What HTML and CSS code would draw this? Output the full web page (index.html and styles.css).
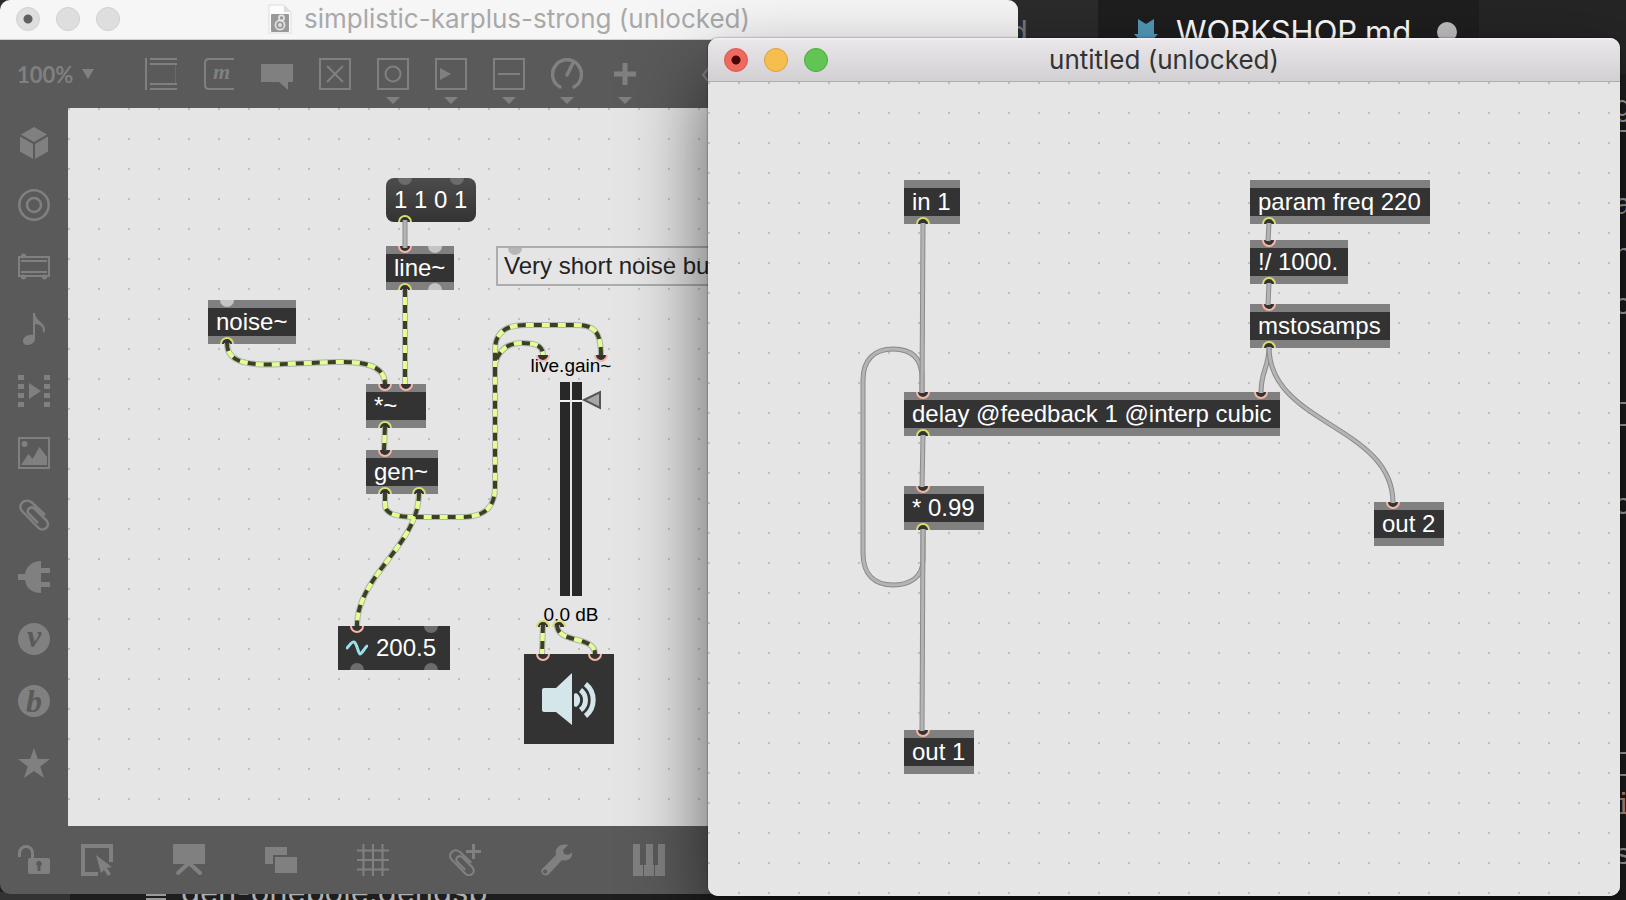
FILE: index.html
```html
<!DOCTYPE html>
<html lang="en">
<head>
<meta charset="utf-8">
<title>Karplus-Strong patch</title>
<link rel="stylesheet" href="styles.css">
</head>
<body>
<div class="editor" aria-hidden="true">
  <div class="tabs">
    <div class="tab tab-prev">README.md</div>
    <div class="tab tab-active">
      <svg class="tab-icon" viewBox="0 0 24 28"><path d="M4 0L12 5L20 0V15H24L12 28L0 15H4Z" fill="#519aba"/></svg>
      <span>WORKSHOP.md</span>
      <i class="unsaved"></i>
    </div>
  </div>
  <div class="code">
    <span class="underlined">g</span><span></span><span>a</span><span>n</span><span>o</span><span></span><span class="ruled"></span><span></span><span>c</span><span></span><span></span><span></span><span></span><span class="ruled"></span><span class="warm">i</span><span>s</span>
  </div>
  <div class="activity">
    <svg viewBox="0 0 48 12" width="48" height="12"><g fill="none" stroke="#999" stroke-width="3"><path d="M4 0V12M37 12Q43 8 42 0"/></g><circle cx="21" cy="0" r="6" fill="#999"/></svg>
  </div>
  <div class="file-row"><i class="file-lines"></i><span>gen-onepole.gendsp</span></div>
</div>

<main class="window window-back">
  <header class="titlebar">
    <div class="lights">
      <button class="light dotted" aria-label="Close"></button>
      <button class="light" aria-label="Minimize"></button>
      <button class="light" aria-label="Zoom"></button>
    </div>
    <h1 class="title">
      <svg class="doc-icon" viewBox="0 0 24 30"><path d="M1 1H16L23 8V29H1Z" fill="#fcfcfc" stroke="#ddd"/><path d="M16 1V8H23Z" fill="#ddd"/><rect x="3" y="10" width="18" height="18" rx="1" fill="#999"/><g fill="none" stroke="#e6e6e6" stroke-width="1.6"><circle cx="12" cy="21" r="4.6"/><circle cx="13.500" cy="14" r="2.600"/></g><circle cx="12" cy="21" r="2" fill="#d2e4e6"/></svg>
      <span>simplistic-karplus-strong (unlocked)</span>
    </h1>
  </header>
  <div class="workspace">
    <nav class="toolbar" aria-label="Objects">
      <label class="zoom">
        <select aria-label="Zoom level"><option>100%</option></select>
        <svg viewBox="0 0 12 10" width="12" height="10"><path d="M0 0H12L6 10Z" fill="currentColor"/></svg>
      </label>
      <button class="tool" aria-label="Object"><svg viewBox="0 0 32 32"><path d="M0 0H2V32H0ZM5 0H32V2H5ZM5 5H32V7H5ZM5 25H32V27H5ZM5 30H32V32H5Z" fill="currentColor"/><path d="M30 7h1v18h-1Z" fill="#6a6a6a"/></svg></button>
      <button class="tool" aria-label="Message"><svg viewBox="0 0 32 32"><path d="M31 1H6Q2 1 2 5V27Q2 31 6 31H31" fill="none" stroke="currentColor" stroke-width="2"/><text x="10" y="21" class="glyph glyph-m">m</text></svg></button>
      <button class="tool" aria-label="Comment"><svg viewBox="0 0 32 32"><path d="M0 6H32V24H27V32L18 24H0Z" fill="currentColor"/></svg></button>
      <button class="tool" aria-label="Toggle"><svg viewBox="0 0 32 32"><path d="M1 1H31V31H1ZM8 8L24 24M24 8L8 24" fill="none" stroke="currentColor" stroke-width="2"/></svg></button>
      <button class="tool more" aria-label="Button"><svg viewBox="0 0 32 32"><path d="M1 1H31V31H1Z" fill="none" stroke="currentColor" stroke-width="2"/><circle cx="16" cy="16" r="7.500" fill="none" stroke="currentColor" stroke-width="2"/></svg></button>
      <button class="tool more" aria-label="Playlist"><svg viewBox="0 0 32 32"><path d="M1 1H31V31H1Z" fill="none" stroke="currentColor" stroke-width="2"/><path d="M5 10L16 16L5 22Z" fill="currentColor"/></svg></button>
      <button class="tool more" aria-label="Slider"><svg viewBox="0 0 32 32"><path d="M1 1H31V31H1ZM5 16H27" fill="none" stroke="currentColor" stroke-width="2"/></svg></button>
      <button class="tool more" aria-label="Dial"><svg viewBox="0 0 32 32"><path d="M9 29A14.500 14.500 0 1 1 23 29M16 17L22 5" fill="none" stroke="currentColor" stroke-width="3.500" stroke-linecap="round"/></svg></button>
      <button class="tool more" aria-label="Add"><svg viewBox="0 0 32 32"><path d="M13.500 5H18.500V13.500H27V18.500H18.500V27H13.500V18.500H5V13.500H13.500Z" fill="currentColor"/></svg></button>
      <button class="tool tool-last" aria-label="Format"><svg viewBox="0 0 32 32"><path d="M22 2L10 17L22 31" fill="none" stroke="currentColor" stroke-width="2"/></svg></button>
    </nav>
    <nav class="sidebar" aria-label="Browser">
      <button class="tool" aria-label="Packages"><svg viewBox="0 0 32 32" fill="currentColor"><path d="M16 0L29 7.500L16 15L3 7.500ZM2 9.500L15 17V32L2 24.500ZM30 9.500L17 17V32L30 24.500Z"/></svg></button>
      <button class="tool" aria-label="Targets"><svg viewBox="0 0 32 32" fill="none" stroke="currentColor" stroke-width="2.500"><circle cx="16" cy="16" r="14.700"/><circle cx="16" cy="16" r="7"/></svg></button>
      <button class="tool" aria-label="Objects"><svg viewBox="0 0 32 32" fill="currentColor"><path d="M1 6H31V25H1Z" fill="none" stroke="currentColor" stroke-width="2"/><path d="M3 9H29V11H3ZM3 20H29V22H3Z"/><circle cx="5.500" cy="5" r="2.500"/><circle cx="5.500" cy="26" r="2.500"/><circle cx="26.500" cy="26" r="2.500"/></svg></button>
      <button class="tool" aria-label="Audio"><svg viewBox="0 0 32 32" fill="currentColor"><path d="M15 0H17C17 8 27 9 27 17Q27 19 25 20C26 14 22 11 17 11V26C17 30 12 32 9 32C6 32 5 30 5 28C5 24 10 21 15 22Z"/></svg></button>
      <button class="tool" aria-label="Video"><svg viewBox="0 0 32 32" fill="currentColor"><path d="M0 0h6v5H0zM0 9h6v5H0zM0 18h6v5H0zM0 27h6v5H0zM26 0h6v5h-6zM26 9h6v5h-6zM26 18h6v5h-6zM26 27h6v5h-6zM11 8L23 16L11 24z"/></svg></button>
      <button class="tool" aria-label="Images"><svg viewBox="0 0 32 32" fill="currentColor"><path d="M1 1H31V31H1Z" fill="none" stroke="currentColor" stroke-width="2"/><circle cx="6.500" cy="7" r="3"/><path d="M3 28L10.500 17L14.500 22L21.500 10L29 20V28Z"/></svg></button>
      <button class="tool" aria-label="Attachments"><svg viewBox="0 0 32 32"><use href="#clip"/></svg></button>
      <button class="tool" aria-label="Plug-ins"><svg viewBox="0 0 32 32" fill="currentColor"><path d="M23 0V7H32V12H23V21H32V26H23V32C14 32 8 27 7 19H0V13H7C8 6 14 0 23 0Z"/></svg></button>
      <button class="tool" aria-label="Vizzie"><svg viewBox="0 0 32 32"><circle cx="16" cy="16" r="16" fill="currentColor"/><text x="9" y="24" class="glyph glyph-v">v</text></svg></button>
      <button class="tool" aria-label="Beap"><svg viewBox="0 0 32 32"><circle cx="16" cy="16" r="16" fill="currentColor"/><text x="8" y="27" class="glyph glyph-b">b</text></svg></button>
      <button class="tool" aria-label="Favorites"><svg viewBox="0 0 32 32"><path d="M16 1L19.800 12H32L22.300 19.500L26 31L16 24L6 31L9.700 19.500L0 12H12.200Z" fill="currentColor"/></svg></button>
    </nav>

    <section class="canvas">
      <div class="node message" id="msg"><i class="port idle-dark"></i><i class="port idle-dark p71"></i>1 1 0 1<i class="port out"></i></div>
      <div class="node object" id="line"><i class="port in"></i><i class="port idle p49"></i>line~<i class="port out"></i><i class="port idle low p49"></i></div>
      <div class="node comment" id="comment"><i class="port idle-soft"></i>Very short noise burst</div>
      <div class="node object" id="noise"><i class="port idle"></i>noise~<i class="port out"></i></div>
      <div class="node object" id="times"><i class="port in"></i><i class="port in p40"></i><span>*~</span><i class="port out"></i></div>
      <div class="node object" id="gen"><i class="port in"></i>gen~<i class="port out"></i><i class="port out p53"></i></div>
      <div class="node number" id="num"><i class="port in"></i><i class="port idle-dark p93"></i><svg viewBox="0 0 22 16" width="22" height="16"><path d="M1 8C4 5 6 1 8 2C11 3 12 13 14 14C16 14 18 9 21 6" fill="none" stroke="#9be0e8" stroke-width="3" stroke-linecap="round"/></svg><span>200.5</span><i class="port idle-dark low"></i><i class="port idle-dark low p93"></i></div>
      <div class="node gain" id="gain">
        <i class="port in"></i><i class="port in p77"></i>
        <span>live.gain~</span>
        <div class="meter"><i></i><i></i><svg viewBox="0 0 20 20" width="20" height="20"><path d="M2 10L18 2V18Z" fill="#a6a6a6" stroke="#555" stroke-width="2"/></svg></div>
        <span>0.0 dB</span>
        <i class="port out"></i><i class="port out p35"></i>
      </div>
      <div class="node dac" id="dac"><i class="port in"></i><i class="port in p71"></i>
        <svg viewBox="0 0 56 54" width="56" height="54"><path d="M3 16H15L31 1V53L15 40H3Q1 40 1 38V18Q1 16 3 16Z" fill="#d4e6ea"/><path d="M33 28V22L35 21A8 8 0 0 1 35 35L33 34Z" fill="#d4e6ea"/><path d="M39.500 18A12.500 12.500 0 0 1 39.500 38M44.500 12A20.500 20.500 0 0 1 44.500 44" fill="none" stroke="#d4e6ea" stroke-width="5"/></svg>
      </div>
      <svg class="wires" width="100%" height="100%"><g transform="translate(-68 -108)">
        <g class="cord"><path d="M405 220V248"/><path class="core" d="M405 220V248"/></g>
        <g class="signal">
          <path id="w1" d="M227 343C227 360 242 365 272 364.500L335 362C365 361 385 366 385 384"/>
          <path id="w2" d="M405 289V384"/>
          <path id="w3" d="M385 427L384 450"/>
          <path id="w4" d="M385 493V505C385 514 397 517 415 517H462C485 517 495 507 495 487V350C495 331 508 325 526 325H575C594 325 601 331 601 355"/>
          <path id="w5" d="M495 375V364C499 349 509 343 522 343C536 343 543 346 543 355"/>
          <path id="w6" d="M419 493C419 545 357 575 357 626"/>
          <path id="w7" d="M543 625L542 654"/>
          <path id="w8" d="M557 625C557 644 595 635 595 654"/>
        </g>
        <g class="signal-core"><use href="#w1"/><use href="#w2"/><use href="#w3"/><use href="#w4"/><use href="#w5"/><use href="#w6"/><use href="#w7"/><use href="#w8"/></g>
        <g class="signal-dash"><use href="#w1"/><use href="#w2"/><use href="#w3"/><use href="#w4"/><use href="#w5"/><use href="#w6"/><use href="#w7"/><use href="#w8"/></g>
      </g></svg>
    </section>

    <nav class="bottombar" aria-label="Patcher">
      <button class="tool lock" aria-label="Lock"><svg viewBox="0 0 32 32"><path d="M1.500 13V9A6.500 6.500 0 0 1 14.500 9V15" fill="none" stroke="currentColor" stroke-width="3"/><path d="M12 14H30Q32 14 32 16V28Q32 30 30 30H12Q10 30 10 28V16Q10 14 12 14Z" fill="currentColor"/><path d="M19.500 27V22A2.700 2.700 0 1 1 22.500 22V27Z" fill="#5a5a5a"/></svg></button>
      <button class="tool" aria-label="Select"><svg viewBox="0 0 32 32"><path d="M17 30H2V2H30V18" fill="none" stroke="currentColor" stroke-width="4"/><path d="M15 11L31 23L26 24L30 30L27 32L23 26L20 29Z" fill="currentColor"/></svg></button>
      <button class="tool" aria-label="Presentation"><svg viewBox="0 0 32 32"><path d="M1 0H31Q32 0 32 1V19Q32 20 31 20H1Q0 20 0 19V1Q0 0 1 0Z" fill="currentColor"/><path d="M5 29L16 19L27 29" fill="none" stroke="currentColor" stroke-width="4" stroke-linecap="round"/></svg></button>
      <button class="tool" aria-label="Windows"><svg viewBox="0 0 32 32" fill="currentColor"><path d="M0 3H22V11H8V20H0ZM10 13H32V29H10Z"/></svg></button>
      <button class="tool" aria-label="Grid"><svg viewBox="0 0 32 32"><path d="M6.500 0V32M16 0V32M25.500 0V32M0 6.500H32M0 16H32M0 25.500H32" stroke="currentColor" stroke-width="2"/></svg></button>
      <button class="tool" aria-label="Attach"><svg viewBox="0 0 32 32"><g transform="translate(-1 5) scale(.86)"><g id="clip"><path d="M27 16L14 3.500C7 -2 -1 6 4 12L20 28.500C25 34 34 27 28 21L17 10C13 6 7 11 11 15L20 24" fill="none" stroke="currentColor" stroke-width="2.500"/></g></g><path d="M23 0H26V6H32V9H26V15H23V9H17V6H23Z" fill="currentColor"/></svg></button>
      <button class="tool" aria-label="Tools"><svg viewBox="0 0 32 32"><path fill-rule="evenodd" d="M27 1L22 6L23 10L27 11L31 8.500C32 14 26 18 21 16L8 30C4 34 -2 29 1 25L15 11C13 4 20 -1 27 1ZM4 25.500A2 2 0 1 0 4.100 29.500A2 2 0 0 0 4 25.500Z" fill="currentColor"/></svg></button>
      <button class="tool" aria-label="Piano"><svg viewBox="0 0 32 32" fill="currentColor"><path d="M0 0H7V21H10V32H0ZM13 0H20V21H21V32H11V21H13ZM25 0H32V32H22V21H25Z"/></svg></button>
    </nav>
  </div>
</main>

<section class="window window-front">
  <header class="titlebar">
    <div class="lights">
      <button class="light red dotted" aria-label="Close"></button>
      <button class="light yellow" aria-label="Minimize"></button>
      <button class="light green" aria-label="Zoom"></button>
    </div>
    <h2 class="title">untitled (unlocked)</h2>
  </header>
  <div class="canvas">
    <div class="node object" id="in1">in 1<i class="port out"></i></div>
    <div class="node object" id="param">param freq 220<i class="port out"></i></div>
    <div class="node object" id="div"><i class="port in"></i>!/ 1000.<i class="port out"></i></div>
    <div class="node object" id="mst"><i class="port in"></i>mstosamps<i class="port out"></i></div>
    <div class="node object" id="delay"><i class="port in"></i><i class="port in p357"></i>delay @feedback 1 @interp cubic<i class="port out"></i></div>
    <div class="node object" id="mul"><i class="port in"></i>* 0.99<i class="port out"></i></div>
    <div class="node object" id="out2"><i class="port in"></i>out 2</div>
    <div class="node object" id="out1"><i class="port in"></i>out 1</div>
    <svg class="wires" width="100%" height="100%"><g transform="translate(-708 -82)">
      <g class="cord">
        <path id="c2" d="M923 529V560C923 577 910 585 893 585C875 585 863 575 863 553V380C863 360 874 349 893 349C912 349 922 358 922 378V393"/><use class="core" href="#c2"/>
        <path id="c1" d="M923 223L922 393"/><use class="core" href="#c1"/>
        <path id="c3" d="M923 435L922 487"/><use class="core" href="#c3"/>
        <path id="c4" d="M923 529L922 731"/><use class="core" href="#c4"/>
        <path id="c5" d="M1269 223L1268 241"/><use class="core" href="#c5"/>
        <path id="c6" d="M1269 283L1268 305"/><use class="core" href="#c6"/>
        <path id="c7" d="M1269 347C1269 368 1261 370 1261 393"/><use class="core" href="#c7"/>
        <path id="c8" d="M1269 347C1269 425 1393 425 1393 503"/><use class="core" href="#c8"/>
      </g>
    </g></svg>
  </div>
</section>
</body>
</html>
```
FILE: styles.css
```css
* { box-sizing: border-box; }
body { margin: 0; height: 100vh; overflow: hidden; position: relative; background: #1b1b1b; font-family: "Liberation Sans", Arial, sans-serif; }
button { border: 0; padding: 0; background: none; color: inherit; }

/* editor behind the windows */
.editor { position: absolute; inset: 0; overflow: hidden; background: #1e1e1e; color: #b0b0b0; font: 31px Inter, "Open Sans", sans-serif; }
.tabs { display: flex; height: 74px; background: #252526; }
.tab { display: flex; align-items: flex-start; padding-top: 15px; line-height: 34px; }
.tab-prev { width: 1098px; justify-content: flex-end; padding-right: 70px; background: #2b2b2b; color: #777; }
.tab-active { width: 381px; gap: 18px; padding-left: 36px; background: #1e1e1e; color: #fff; }
.tab-icon { width: 24px; height: 28px; margin-top: 4px; }
.unsaved { width: 20px; height: 20px; margin: 7px 0 0 8px; border-radius: 50%; background: #c0c0c0; }
.code { position: absolute; top: 84px; right: 0; width: 12px; display: flex; flex-direction: column; font: 30px "Liberation Mono", monospace; }
.code span { height: 50px; line-height: 48px; }
.code .underlined { height: 48px; border-bottom: 2px solid #b0b0b0; }
.code .ruled { height: 24px; margin: 20px 0 6px; border: solid #b0b0b0; border-width: 2px 0; }
.code .warm { color: #c98; }
.activity { position: absolute; left: 0; bottom: 0; width: 70px; height: 8px; overflow: hidden; background: #333; }
.file-row { position: absolute; left: 146px; bottom: -8px; display: flex; gap: 15px; line-height: 32px; }
.file-lines { width: 20px; height: 6px; margin-top: 18px; border: solid #999; border-width: 2px 0; }

/* windows */
.window { position: absolute; display: flex; flex-direction: column; overflow: hidden; border-radius: 10px; }
.window-back { inset: 0 608px 6px 0; background: #5a5a5a; }
.window-front { inset: 38px 6px 4px 708px; background: #e5e5e5; box-shadow: 0 0 2px rgba(0, 0, 0, .6), 0 36px 80px rgba(0, 0, 0, .6); }
.titlebar { position: relative; flex: none; display: flex; align-items: center; justify-content: center; }
.window-back .titlebar { height: 40px; padding-bottom: 2px; background: #f6f6f6; border-bottom: 1px solid #d0d0d0; color: #a9a9a9; }
.window-front .titlebar { height: 44px; background: linear-gradient(#f4f2f4, #e8e6e8 3px, #d2d0d2); border-bottom: 1px solid #adadad; color: #333; }
.lights { position: absolute; left: 16px; display: flex; gap: 16px; }
.light { width: 24px; height: 24px; border: 1px solid #cfcfcf; border-radius: 50%; background: #dedede; }
.light.dotted { background: radial-gradient(circle, #606060 4px, #dedede 5px); }
.light.red { border-color: #dc5248; background: radial-gradient(circle, #490603 4px, #ef6a5e 5px); }
.light.yellow { border-color: #dda03c; background: #f6be4f; }
.light.green { border-color: #4aa93c; background: #61c554; }
.title { display: flex; align-items: center; gap: 12px; margin: 0; font: 26px/32px Inter, "Open Sans", sans-serif; }
.doc-icon { width: 24px; height: 30px; }

.workspace { flex: 1; min-height: 0; display: grid; grid-template: 68px 1fr 68px / 68px 1fr; color: #808080; }
.toolbar { grid-column: 1 / 3; display: flex; align-items: center; gap: 26px; padding-left: 17px; }
.zoom { display: flex; align-items: center; gap: 5px; width: 102px; }
.zoom select { appearance: none; border: 0; padding: 0; width: 60px; background: none; color: inherit; font: bold 22px Lato, sans-serif; }
.tool { position: relative; flex: none; width: 32px; height: 32px; }
.tool > svg { display: block; width: 32px; height: 32px; }
.more::after { content: ""; position: absolute; left: 9px; top: 39px; border: 7px solid transparent; border-top-color: currentColor; border-bottom: 0; }
.tool-last { margin-left: 26px; }
.glyph { font-family: "Liberation Serif", serif; font-style: italic; font-weight: bold; }
.glyph-m { font-size: 22px; fill: currentColor; }
.glyph-v { font-size: 32px; fill: #5a5a5a; }
.glyph-b { font-size: 32px; fill: #5a5a5a; }
.sidebar { display: flex; flex-direction: column; align-items: center; gap: 30px; padding-top: 19px; }
.bottombar { grid-column: 1 / 3; display: flex; align-items: center; gap: 60px; padding-left: 18px; }
.lock { margin-right: -29px; }

/* patcher canvas */
.canvas { position: relative; flex: 1; overflow: hidden; background: conic-gradient(at 2px 2px, transparent 75%, #bfbfbf 0) 0 0 / 30px 30px #e5e5e5; }
.wires { position: absolute; inset: 0; pointer-events: none; fill: none; }
.cord { stroke: #8a8a8a; stroke-width: 5; }
.cord .core { stroke: #b4b4b4; stroke-width: 3; }
.signal { stroke: #b2b2b2; stroke-width: 6; }
.signal-core { stroke: #e2ff90; stroke-width: 4; }
.signal-dash { stroke: #3b3f28; stroke-width: 4; stroke-dasharray: 8 8; }

.node { position: absolute; height: 44px; padding-left: 8px; font-size: 24px; line-height: 28px; color: #fff; white-space: nowrap; }
.object { border: solid #808080; border-width: 8px 0; background: #333; }
.object > .port { top: -8px; }
.object > .port.out, .object > .port.low { top: auto; bottom: -8px; }
.message { padding-top: 8px; border-radius: 8px; background: linear-gradient(#4c4c4c, #333); }
.comment { width: 600px; height: 40px; padding: 4px 6px; border: 2px solid #adadad; color: #222; }
.number { display: flex; align-items: center; gap: 8px; background: #333; }
.dac { height: 90px; padding: 18px 17px; background: #333; }
.gain { height: 272px; padding: 1px 0 0; color: #000; font-size: 19px; line-height: 20px; text-align: center; display: flex; flex-direction: column; align-items: center; gap: 6px; }
.meter { position: relative; width: 22px; height: 214px; margin-bottom: 3px; display: flex; gap: 2px; }
.meter i { flex: 1; background: linear-gradient(#282828 18px, #f4f4f4 18px, #f4f4f4 20px, #282828 20px); }
.meter svg { position: absolute; left: 22px; top: 8px; }

.port { position: absolute; left: 12px; top: 0; width: 14px; height: 7px; }
.port.in { border: 2px solid #f4b6a6; border-top: 0; border-radius: 0 0 7px 7px; background: #333; }
.port.out { top: auto; bottom: 0; border: 2px solid #d8de70; border-bottom: 0; border-radius: 7px 7px 0 0; background: #333; }
.port.idle, .port.idle-dark, .port.idle-soft { border-radius: 0 0 7px 7px; background: #c4c4c6; }
.port.idle-dark { background: #6c6c6c; }
.port.idle-soft { left: 10px; background: #b6b6b6; }
.port.idle.low, .port.idle-dark.low { top: auto; bottom: 0; border-radius: 7px 7px 0 0; }
.object > .port.idle.low { bottom: -8px; }
.port.p35 { left: 28px; }
.port.p40 { left: 33px; }
.port.p49 { left: 42px; }
.port.p53 { left: 46px; }
.port.p71 { left: 64px; }
.port.p77 { left: 70px; }
.port.p93 { left: 86px; }
.port.p357 { left: 350px; }

#msg { left: 318px; top: 70px; width: 90px; }
#line { left: 318px; top: 138px; width: 68px; }
#comment { left: 428px; top: 138px; }
#noise { left: 140px; top: 192px; width: 88px; }
#times { left: 298px; top: 276px; width: 60px; }
#gen { left: 298px; top: 342px; width: 72px; }
#num { left: 270px; top: 518px; width: 112px; }
#gain { left: 456px; top: 247px; width: 94px; }
#dac { left: 456px; top: 546px; width: 90px; }

#in1 { left: 196px; top: 98px; width: 56px; }
#param { left: 542px; top: 98px; width: 180px; }
#div { left: 542px; top: 158px; width: 98px; }
#mst { left: 542px; top: 222px; width: 140px; }
#delay { left: 196px; top: 310px; width: 376px; }
#mul { left: 196px; top: 404px; width: 80px; }
#out2 { left: 666px; top: 420px; width: 70px; }
#out1 { left: 196px; top: 648px; width: 70px; }
```
